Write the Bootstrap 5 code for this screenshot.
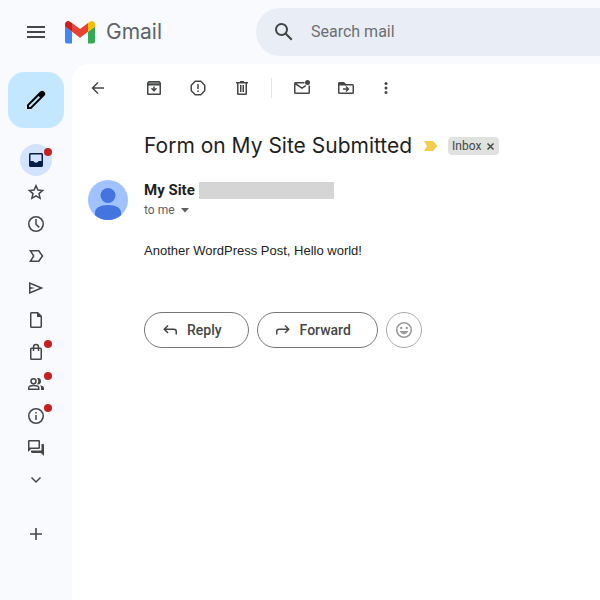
<!DOCTYPE html>
<html lang="en">
<head>
<meta charset="utf-8">
<meta name="viewport" content="width=device-width, initial-scale=1">
<title>Gmail</title>
<link href="https://cdn.jsdelivr.net/npm/bootstrap@5.3.0/dist/css/bootstrap.min.css" rel="stylesheet">
<style>
  body { background: #f8fafd; color: #444746; font-family: Roboto, "Liberation Sans", sans-serif; font-size: 14px; line-height: 20px; }
  svg { display: block; flex: none; fill: currentColor; }
  .line { fill: none; stroke: currentColor; stroke-width: 1.5; }
  .app-head { height: 64px; }
  .icon-btn { width: 44px; height: 40px; padding: 0; border: 0; background: none; color: #444746; display: flex; align-items: center; justify-content: center; flex: none; }
  .icon-btn.slim { width: 40px; }
  .menu-btn { width: 48px; margin-left: 12px; }
  .brand { width: 196px; padding-left: 5px; color: #5f6368; font-family: Inter, sans-serif; font-size: 21px; line-height: 32px; gap: 11px; }
  .brand:hover { color: #5f6368; }
  .search { height: 48px; margin-top: 8px; background: #e9eef6; border-radius: 24px 0 0 24px; padding-left: 16px; gap: 15px; }
  .search input { border: 0; background: none; outline: 0; padding: 0; font-size: 16px; line-height: 24px; min-width: 0; }
  .search input::placeholder { color: #6b6e70; opacity: 1; }
  .rail { width: 72px; padding-top: 8px; }
  .compose { width: 56px; height: 56px; border: 0; border-radius: 16px; background: #c2e7ff; color: #000; margin-bottom: 16px; }
  .rail-link { width: 32px; height: 32px; color: #444746; border-radius: 50%; }
  .rail-link.current { background: #d3e3fd; color: #041e49; }
  .new-dot { position: absolute; top: 4px; right: 0; width: 8px; height: 8px; border-radius: 50%; background: #c5221f; }
  .add-btn { margin-top: 18px; }
  .pane { background: #fff; border-radius: 16px 0 0 0; min-height: calc(100vh - 64px); min-width: 0; }
  .tools { height: 48px; padding-left: 6px; }
  .back-btn { margin-right: 14px; }
  .more-btn { margin-left: -2px; }
  .rule { width: 1px; height: 20px; background: #e3e5e8; margin: 0 8px 0 7px; }
  .message { padding: 0 16px; }
  .indent { padding-left: 56px; }
  .subject { color: #1f1f1f; font-family: Inter, sans-serif; font-size: 21px; line-height: 28px; font-weight: 400; margin-right: 12px; }
  .subject-row { padding-top: 20px; }
  .tag { height: 18px; background: #dfe2df; border-radius: 4px; font-size: 12px; line-height: 18px; padding: 0 4px; gap: 5px; margin-left: 10px; }
  .tag button { border: 0; padding: 0; background: none; color: #444746; }
  .sender-row { padding-top: 20px; }
  .sender { color: #1f1f1f; font-size: 15px; font-weight: 700; }
  .redacted { width: 135px; height: 17px; background: #d5d5d5; }
  .to { border: 0; padding: 0; background: none; color: #5e5e5e; font-size: 12px; line-height: 16px; gap: 5px; margin-top: 2px; }
  .mail-text { color: #222; font-family: "Liberation Sans", sans-serif; font-size: 13px; line-height: 20px; padding-top: 21px; }
  .replies { padding-top: 51px; }
  .pill { height: 36px; border: 1px solid #747775; border-radius: 18px; color: #444746; font-size: 14px; font-weight: 500; padding: 0 26px 0 16px; gap: 6px; }
  .round { width: 36px; padding: 0; color: #9a9c9b; border-color: #a9abaa; }
</style>
<script src="https://cdn.jsdelivr.net/npm/bootstrap@5.3.0/dist/js/bootstrap.bundle.min.js"></script>
</head>
<body>
<header class="app-head d-flex align-items-start">
  <div class="d-flex align-items-center h-100">
    <button class="icon-btn menu-btn" aria-label="Main menu"><svg width="24" height="24" viewBox="0 0 24 24"><path d="M3 6h18v2H3zM3 11h18v2H3zM3 16h18v2H3z"/></svg></button>
    <a href="#" class="brand d-flex align-items-center text-decoration-none">
      <svg width="30" height="23" viewBox="0 0 30 23"><path fill="#4285f4" d="M2 22.500h5V10.700L0 5.500v15c0 1.100.9 2 2 2z"/><path fill="#34a853" d="M23 22.500h5c1.100 0 2-.9 2-2v-15l-7 5.200z"/><path fill="#fbbc04" d="M23 2v8.700l7-5.200V3.300c0-2.700-3-4.100-5.100-2.600z"/><path fill="#ea4335" d="M7 10.700V2l8 6 8-6v8.700l-8 6z"/><path fill="#c5221f" d="M0 3.300v2.200l7 5.200V2L5.100.7C3-.8 0 .6 0 3.300z"/></svg>
      <span>Gmail</span>
    </a>
  </div>
  <form class="search d-flex align-items-center flex-grow-1">
    <label for="q"><svg width="24" height="24" viewBox="0 0 24 24" role="img" aria-label="Search mail"><path d="M20.500 19l-5.700-5.700A6.500 6.500 0 1 0 13.300 14.800l5.700 5.700zM9.500 14a4.500 4.500 0 1 1 0-9 4.500 4.500 0 0 1 0 9z"/></svg></label>
    <input id="q" type="text" class="flex-grow-1" placeholder="Search mail">
  </form>
</header>
<div class="d-flex">
  <nav class="rail d-flex flex-column align-items-center flex-shrink-0" aria-label="Mailboxes">
    <button class="compose d-flex align-items-center justify-content-center" aria-label="Compose"><svg width="24" height="24" viewBox="0 0 24 24"><path fill-rule="evenodd" d="M20.400 4l-.4-.4a2.700 2.700 0 0 0-3.800 0L3 16.800V21h4.200L20.400 7.800a2.700 2.700 0 0 0 0-3.800zM6.400 19H5v-1.400l9.700-9.700 1.400 1.400z"/></svg></button>
    <a href="#" class="rail-link current position-relative d-flex align-items-center justify-content-center" aria-label="Inbox"><svg width="20" height="20" viewBox="0 0 20 20"><path fill-rule="evenodd" d="M4.500 3h11c.8 0 1.500.7 1.500 1.500v11c0 .8-.7 1.500-1.500 1.500h-11c-.8 0-1.500-.7-1.500-1.500v-11C3 3.700 3.700 3 4.500 3zm0 1.500V11h3c.5 1 1.400 1.700 2.500 1.700s2-.7 2.500-1.700h3V4.500z"/></svg><span class="new-dot"></span></a>
    <a href="#" class="rail-link d-flex align-items-center justify-content-center" aria-label="Starred"><svg width="20" height="20" viewBox="0 0 20 20"><path class="line" d="M10 3.700l1.900 4.400 4.700.4-3.600 3.100 1.100 4.700-4.100-2.500-4.100 2.500L7 11.600 3.400 8.500l4.700-.4z"/></svg></a>
    <a href="#" class="rail-link d-flex align-items-center justify-content-center" aria-label="Snoozed"><svg width="20" height="20" viewBox="0 0 20 20"><path class="line" d="M10 2.750a7.250 7.250 0 1 0 0 14.500 7.250 7.250 0 0 0 0-14.500zM10 5v5.200l3.300 3.200"/></svg></a>
    <a href="#" class="rail-link d-flex align-items-center justify-content-center" aria-label="Important"><svg width="20" height="20" viewBox="0 0 20 20"><path class="line" d="M4.400 4.750h8.300L16.500 10l-3.800 5.250H4.400L7.700 10z"/></svg></a>
    <a href="#" class="rail-link d-flex align-items-center justify-content-center" aria-label="Sent"><svg width="20" height="20" viewBox="0 0 20 20"><path fill-rule="evenodd" d="M3 16V4l14.500 6zm1.500-2.300L13.500 10l-9-3.700V9L9 10l-4.500 1z"/></svg></a>
    <a href="#" class="rail-link d-flex align-items-center justify-content-center" aria-label="Drafts"><svg width="20" height="20" viewBox="0 0 20 20"><path fill-rule="evenodd" d="M5.500 2H12l4 4v10.500c0 .8-.7 1.500-1.500 1.500h-9c-.8 0-1.500-.7-1.500-1.500v-13C4 2.700 4.700 2 5.500 2zm0 1.500v13h9V7H11V3.500z"/></svg></a>
    <a href="#" class="rail-link position-relative d-flex align-items-center justify-content-center" aria-label="Purchases"><svg width="20" height="20" viewBox="0 0 20 20"><path class="line" d="M5.500 6.250h9c.4 0 .75.300.75.750v9.500c0 .4-.3.750-.75.750h-9a.75.75 0 0 1-.75-.75V7c0-.4.3-.75.750-.75zM7.500 9V4.900a2.500 2.500 0 0 1 5 0V9"/></svg><span class="new-dot"></span></a>
    <a href="#" class="rail-link position-relative d-flex align-items-center justify-content-center" aria-label="Social"><svg width="20" height="20" viewBox="0 0 20 20"><path class="line" d="M7.500 4.750a2.500 2.500 0 1 0 0 5 2.500 2.500 0 0 0 0-5zM2.750 15.250v-1.400c0-1.400 2.500-2.300 4.950-2.300s5.050.9 5.050 2.300v1.400z"/><path d="M11 4.200c2.900-.6 4 1.200 4 3s-1.200 3.600-4 3.100c1.700-2 1.700-4.100 0-6.100zM14 11.200c2.400.4 4 1.400 4 2.800v2h-3v-2.100c0-1.200-.4-2-1-2.700z"/></svg><span class="new-dot"></span></a>
    <a href="#" class="rail-link position-relative d-flex align-items-center justify-content-center" aria-label="Updates"><svg width="20" height="20" viewBox="0 0 20 20"><circle class="line" cx="10" cy="10" r="7.250"/><path d="M9.250 9h1.500v5h-1.500zM9.250 6h1.500v1.500h-1.500z"/></svg><span class="new-dot"></span></a>
    <a href="#" class="rail-link d-flex align-items-center justify-content-center" aria-label="Forums"><svg width="20" height="20" viewBox="0 0 20 20"><path fill-rule="evenodd" d="M3.200 2h9.600c.7 0 1.200.5 1.200 1.200v6.600c0 .7-.5 1.200-1.200 1.200H5l-3 3V3.200C2 2.500 2.500 2 3.200 2zm.3 1.500v6h9v-6zM15.500 6h1.300c.7 0 1.200.5 1.200 1.200V18l-3-3H6.200C5.500 15 5 14.500 5 13.800v-1.300h10.500z"/></svg></a>
    <a href="#" class="rail-link d-flex align-items-center justify-content-center" aria-label="More"><svg width="20" height="20" viewBox="0 0 20 20"><path class="line" d="M5.500 7.500L10 12l4.500-4.500"/></svg></a>
    <button class="icon-btn add-btn" aria-label="Create new label"><svg width="20" height="20" viewBox="0 0 20 20"><path d="M9.200 4h1.600v5.200H16v1.600h-5.200V16H9.200v-5.200H4V9.200h5.200z"/></svg></button>
  </nav>
  <main class="pane flex-grow-1">
    <div class="tools d-flex align-items-center" role="toolbar" aria-label="Message actions">
      <button class="icon-btn slim back-btn" aria-label="Back to Inbox"><svg width="20" height="20" viewBox="0 0 20 20"><path class="line" d="M16 10H5M10 4.500L4.500 10l5.500 5.500"/></svg></button>
      <button class="icon-btn" aria-label="Archive"><svg width="20" height="20" viewBox="0 0 20 20"><path class="line" d="M3.750 6.500v9.250c0 .3.200.5.500.5h11.500c.3 0 .5-.2.500-.5V6.500M10 8.500v4M7.500 10.300l2.500 2.500 2.500-2.500"/><path d="M4.500 3h11L17 4.800v2.700H3V4.800z"/><path fill="#a6a8a7" d="M5 4.500h10l.5 1h-11z"/></svg></button>
      <button class="icon-btn" aria-label="Report spam"><svg width="20" height="20" viewBox="0 0 20 20"><path class="line" d="M7.200 3.250h5.600l3.950 3.950v5.600l-3.950 3.950H7.200L3.250 12.800V7.200z"/><path d="M9.250 6h1.500v5h-1.500zM9.250 12.500h1.500V14h-1.500z"/></svg></button>
      <button class="icon-btn" aria-label="Delete"><svg width="20" height="20" viewBox="0 0 20 20"><path d="M8 3h4v1h4v1.500H4V4h4zM8 7h1.500v7H8zM10.500 7H12v7h-1.500z"/><path class="line" d="M5.750 5v10.750c0 .3.200.5.500.5h7.500c.3 0 .5-.2.500-.5V5"/></svg></button>
      <div class="rule"></div>
      <button class="icon-btn" aria-label="Mark as unread"><svg width="20" height="20" viewBox="0 0 20 20"><path class="line" d="M12.500 4.750h-9a.75.75 0 0 0-.75.750v9c0 .4.300.75.750.75h13c.4 0 .75-.3.750-.75v-7M3 5.500l7 4.600 3.800-2.500"/><circle cx="15.500" cy="4.500" r="2.500"/></svg></button>
      <button class="icon-btn" aria-label="Move to"><svg width="20" height="20" viewBox="0 0 20 20"><path d="M2 5.500C2 4.700 2.700 4 3.500 4H8l2 2v1.500H2zM10.500 8l3 3-3 3-1-1 1.200-1.300H7v-1.400h3.700L9.500 9z"/><path class="line" d="M2.750 5v9.500c0 .4.300.75.750.75h13c.4 0 .75-.3.750-.75v-7c0-.4-.3-.75-.75-.75H9"/></svg></button>
      <button class="icon-btn slim more-btn" aria-label="More actions"><svg width="20" height="20" viewBox="0 0 20 20"><circle cx="10" cy="5.500" r="1.500"/><circle cx="10" cy="10" r="1.500"/><circle cx="10" cy="14.500" r="1.500"/></svg></button>
    </div>
    <article class="message">
      <div class="indent subject-row d-flex align-items-center">
        <h1 class="subject mb-0">Form on My Site Submitted</h1>
        <svg width="14" height="10" viewBox="0 0 14 10"><path fill="#f7cb4d" d="M0 0h9l4.500 5L9 10H0l3-5z"/></svg>
        <span class="tag d-flex align-items-center">Inbox <button aria-label="Remove label Inbox"><svg width="9" height="10" viewBox="0 0 9 10"><path class="line" d="M1.500 2.500l6 6M7.500 2.500l-6 6"/></svg></button></span>
      </div>
      <div class="sender-row d-flex gap-3">
        <svg width="40" height="40" viewBox="0 0 40 40"><circle cx="20" cy="20" r="20" fill="#a0c3ff"/><circle cx="20" cy="15.500" r="7.500" fill="#4374e0"/><path fill="#4374e0" d="M7 32.500C7 28 12 25 20 25s13 3 13 7.500v2.700a20 20 0 0 1-26 0z"/></svg>
        <div>
          <div class="d-flex align-items-center gap-1"><span class="sender">My Site</span><span class="redacted"></span></div>
          <button class="to d-flex align-items-center"><span>to me</span><svg width="10" height="5" viewBox="0 0 10 5"><path d="M1 0h8L5 4.500z"/></svg></button>
        </div>
      </div>
      <div class="indent">
        <p class="mail-text mb-0">Another WordPress Post, Hello world!</p>
        <div class="replies d-flex gap-2">
          <button class="pill btn d-flex align-items-center"><svg width="20" height="20" viewBox="0 0 20 20"><path class="line" d="M15.250 14.500v-3c0-1.400-1-2.300-2.300-2.300H3.500M7 5.500L3.300 9.200 7 13"/></svg>Reply</button>
          <button class="pill btn d-flex align-items-center"><svg width="20" height="20" viewBox="0 0 20 20"><path class="line" d="M2.750 14.500v-3c0-1.400 1-2.300 2.300-2.300h9.450M11 5.500l3.700 3.700L11 13"/></svg>Forward</button>
          <button class="pill round btn d-flex align-items-center justify-content-center" aria-label="Add reaction"><svg width="20" height="20" viewBox="0 0 20 20"><circle class="line" cx="10" cy="10" r="7.250"/><circle cx="7.200" cy="8" r="1.200"/><circle cx="12.800" cy="8" r="1.200"/><path d="M5.800 11h8.400c-.6 2-2.200 3.200-4.200 3.200S6.400 13 5.800 11z"/></svg></button>
        </div>
      </div>
    </article>
  </main>
</div>
</body>
</html>
